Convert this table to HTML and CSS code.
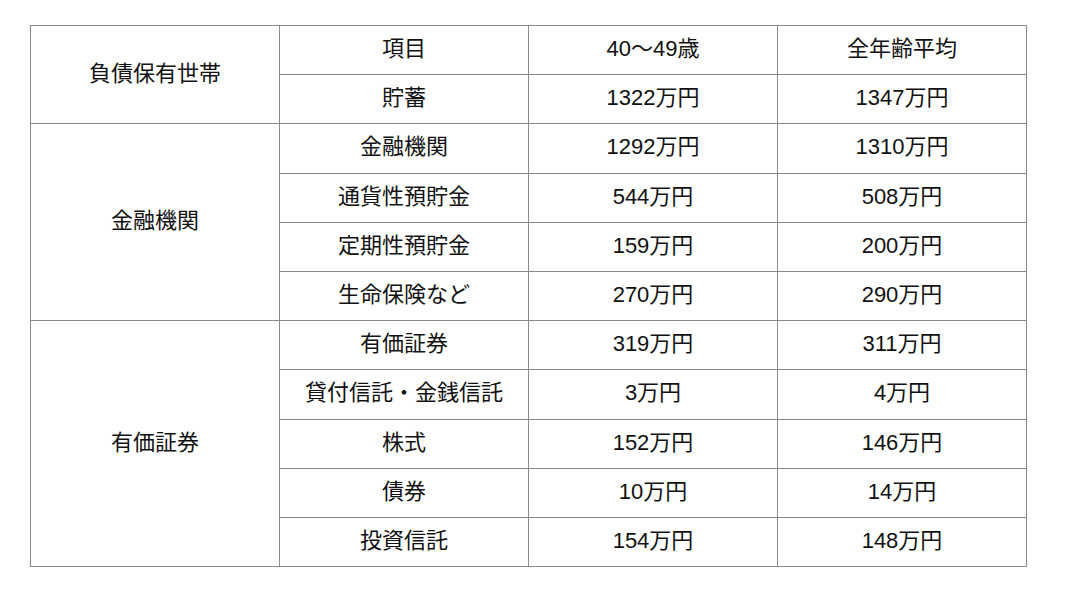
FILE: index.html
```html
<!DOCTYPE html>
<html lang="ja">
<head>
<meta charset="utf-8">
<link rel="stylesheet" href="styles.css">
</head>
<body>
<div class="page">
<table class="data">
<tbody>
<tr><td class="group" rowspan="2">負債保有世帯</td><td>項目</td><td>40〜49歳</td><td>全年齢平均</td></tr>
<tr><td>貯蓄</td><td>1322万円</td><td>1347万円</td></tr>
<tr><td class="group" rowspan="4">金融機関</td><td>金融機関</td><td>1292万円</td><td>1310万円</td></tr>
<tr><td>通貨性預貯金</td><td>544万円</td><td>508万円</td></tr>
<tr><td>定期性預貯金</td><td>159万円</td><td>200万円</td></tr>
<tr><td>生命保険など</td><td>270万円</td><td>290万円</td></tr>
<tr><td class="group" rowspan="5">有価証券</td><td>有価証券</td><td>319万円</td><td>311万円</td></tr>
<tr><td>貸付信託・金銭信託</td><td>3万円</td><td>4万円</td></tr>
<tr><td>株式</td><td>152万円</td><td>146万円</td></tr>
<tr><td>債券</td><td>10万円</td><td>14万円</td></tr>
<tr><td>投資信託</td><td>154万円</td><td>148万円</td></tr>
</tbody>
</table>
</div>
</body>
</html>
```
FILE: styles.css
```css
html, body {
  margin: 0;
  padding: 0;
  background: #fff;
}
.page {
  padding: 25px 0 0 30px;
}
.data {
  border-collapse: collapse;
  table-layout: fixed;
  width: 997px;
  font-family: "Liberation Sans", "Noto Sans CJK JP", sans-serif;
  font-size: 22px;
  color: #111;
}
.data td {
  border: 1px solid #8a8a8a;
  height: 46.2px;
  padding: 0 0 2px;
  text-align: center;
  vertical-align: middle;
  line-height: 1;
}
```
